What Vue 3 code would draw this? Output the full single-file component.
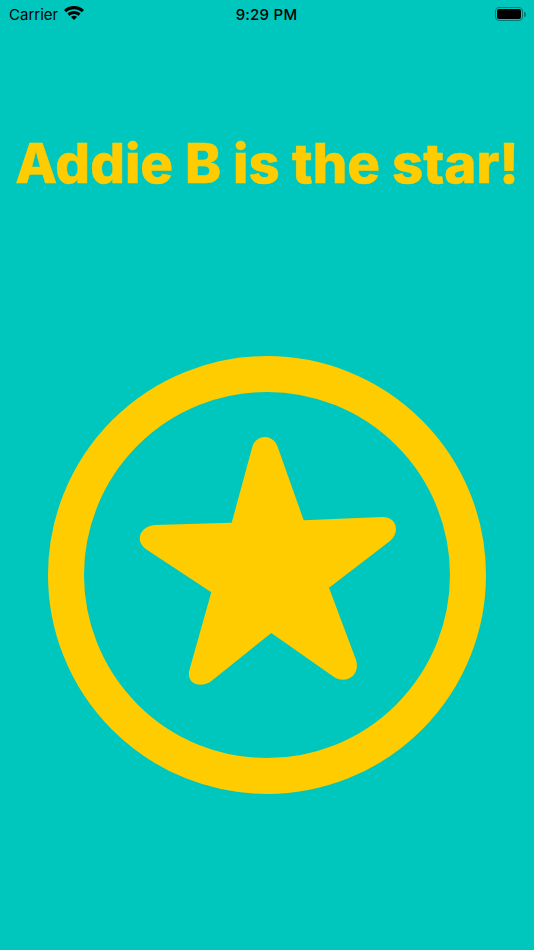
<script setup>
const title = 'Addie B is the star!'
</script>

<template>
  <div class="screen">
    <header class="status">
      <div class="left">
        <span>Carrier</span>
        <svg class="wifi" width="20" height="14" viewBox="0 0 20 14">
          <path d="M10 0C6 0 2.600 1.500 0 4L2.200 6.300C4.200 4.400 7 3.200 10 3.200S15.800 4.400 17.800 6.300L20 4C17.400 1.500 14 0 10 0Z" />
          <path d="M10 5C7.400 5 5.100 6 3.400 7.600L5.600 9.900C6.800 8.800 8.300 8.100 10 8.100S13.200 8.800 14.400 9.900L16.600 7.600C14.900 6 12.600 5 10 5Z" />
          <path d="M10 9.700C8.900 9.700 7.800 10.100 7 10.900L10 14L13 10.900C12.200 10.100 11.100 9.700 10 9.700Z" />
        </svg>
      </div>
      <span class="time">9:29 PM</span>
      <div class="right">
        <div class="battery"><div class="level"></div></div>
        <div class="nub"></div>
      </div>
    </header>

    <h1 class="title">{{ title }}</h1>

    <div class="ring">
      <svg class="star" width="270" height="290" viewBox="132 430 270 290">
        <path d="M231.700 522.700L252.300 447C256 434 273 433.500 277.700 447L303.700 520.300L382 517C396 516.500 401 531 390 541L329 587.700L356 660C361 676 345 685 333.300 676.500L271.300 633L212 680.500C201 689.500 185 684 189.700 669L211.300 592.300L146.500 549.500C134 541 140 526 155 525Z" />
      </svg>
    </div>
  </div>
</template>

<style scoped>
.screen {
  width: 534px;
  height: 950px;
  background: #00c7be;
  display: flex;
  flex-direction: column;
  align-items: center;
  overflow: hidden;
  font-family: Inter, "Liberation Sans", sans-serif;
}
.status {
  width: 100%;
  height: 28px;
  box-sizing: border-box;
  padding: 0 8px 0 9px;
  display: grid;
  grid-template-columns: 1fr auto 1fr;
  align-items: center;
  color: #000;
  font-size: 15px;
}
.left {
  display: flex;
  align-items: center;
  gap: 6px;
}
.wifi {
  fill: #000;
  margin-top: -2px;
}
.time {
  font-weight: 500;
  letter-spacing: 0.25px;
  margin-left: -2px;
}
.right {
  display: flex;
  align-items: center;
  justify-content: flex-end;
  gap: 1px;
}
.battery {
  width: 28px;
  height: 14px;
  box-sizing: border-box;
  border: 1px solid #007a74;
  border-radius: 4px;
  padding: 1px;
}
.level {
  height: 100%;
  background: #000;
  border-radius: 2px;
}
.nub {
  width: 2px;
  height: 5px;
  background: #007a74;
  border-radius: 0 2px 2px 0;
}
.title {
  margin: 100px 0 0;
  height: 70px;
  line-height: 70px;
  font-size: 54.5px;
  font-weight: 800;
  -webkit-text-stroke: 0.5px #ffcc00;
  color: #ffcc00;
  white-space: nowrap;
}
.ring {
  width: 438px;
  height: 438px;
  margin-top: 158px;
  box-sizing: border-box;
  border: 36px solid #ffcc00;
  border-radius: 50%;
  display: flex;
  align-items: center;
  justify-content: center;
}
.star {
  fill: #ffcc00;
  flex: none;
}
</style>
